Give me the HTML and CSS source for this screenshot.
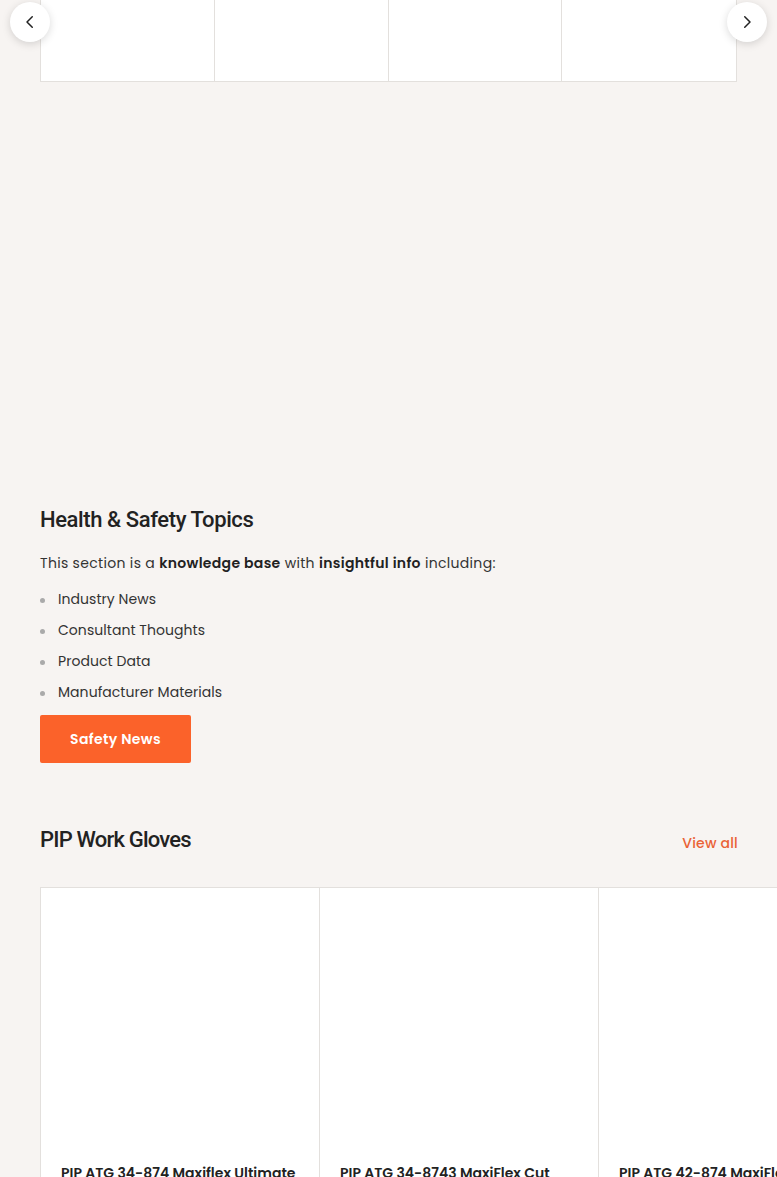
FILE: index.html
```html
<!DOCTYPE html>
<html>
<head>
    <meta charset="utf-8">
    <link rel="stylesheet" href="styles.css">
</head>
<body>
    <div class="carousel">
        <button class="nav-btn nav-prev" title="Previous">
            <svg viewBox="0 0 24 24" width="18" height="18"><path d="M15 5 L8 12 L15 19" fill="none" stroke="#222" stroke-width="2" stroke-linecap="round" stroke-linejoin="round"/></svg>
        </button>
        <div class="carousel-track">
            <div class="carousel-cell"></div>
            <div class="carousel-cell"></div>
            <div class="carousel-cell"></div>
            <div class="carousel-cell"></div>
        </div>
        <button class="nav-btn nav-next" title="Next">
            <svg viewBox="0 0 24 24" width="18" height="18"><path d="M9 5 L16 12 L9 19" fill="none" stroke="#222" stroke-width="2" stroke-linecap="round" stroke-linejoin="round"/></svg>
        </button>
    </div>

    <div class="topics">
        <h2 class="section-title">Health &amp; Safety Topics</h2>
        <p class="intro">This section is a <strong>knowledge base</strong> with <strong>insightful info</strong> including:</p>
        <ul class="topic-list">
            <li>Industry News</li>
            <li>Consultant Thoughts</li>
            <li>Product Data</li>
            <li>Manufacturer Materials</li>
        </ul>
        <a class="btn-orange" href="#">Safety News</a>
    </div>

    <div class="collection">
        <div class="collection-header">
            <h2 class="section-title">PIP Work Gloves</h2>
            <a class="view-all" href="#">View all</a>
        </div>
        <div class="product-row">
            <div class="product-card">
                <div class="product-image"></div>
                <div class="product-title">PIP ATG 34-874 Maxiflex Ultimate</div>
            </div>
            <div class="product-card">
                <div class="product-image"></div>
                <div class="product-title">PIP ATG 34-8743 MaxiFlex Cut</div>
            </div>
            <div class="product-card">
                <div class="product-image"></div>
                <div class="product-title">PIP ATG 42-874 MaxiFlex Ultimate</div>
            </div>
        </div>
    </div>
</body>
</html>
```

FILE: styles.css
```css
body {
    margin: 0;
    background: #f7f4f2;
    font-family: 'Poppins', 'Open Sans', sans-serif;
    color: #222;
    overflow: hidden;
}

/* carousel at top (cut off) */
.carousel {
    position: relative;
    padding: 0 40px;
}

.carousel-track {
    display: grid;
    grid-template-columns: repeat(4, 1fr);
    height: 82px;
    background: white;
    border: 1px solid #e3e0dd;
    border-top: none;
    box-sizing: border-box;
}

.carousel-cell {
    border-right: 1px solid #e3e0dd;
}

.carousel-cell:last-child {
    border-right: none;
}

.nav-btn {
    position: absolute;
    top: 2px;
    width: 40px;
    height: 40px;
    border-radius: 50%;
    border: none;
    background: white;
    box-shadow: 0 2px 8px rgba(0, 0, 0, 0.15);
    display: flex;
    align-items: center;
    justify-content: center;
    padding: 0;
}

.nav-prev {
    left: 10px;
}

.nav-next {
    right: 10px;
}

/* topics */
.topics {
    padding: 0 40px;
    margin-top: 423px;
}

.section-title {
    font-family: 'Roboto', sans-serif;
    font-size: 22px;
    font-weight: 500;
    letter-spacing: -0.4px;
    color: #222;
    margin: 0;
    line-height: 30px;
}

.collection .section-title {
    letter-spacing: -0.8px;
}

.intro {
    font-size: 14px;
    letter-spacing: 0.32px;
    margin: 16px 0 9px;
    line-height: 24px;
    color: #333;
}

.intro strong {
    font-weight: 600;
    color: #222;
}

.topic-list {
    list-style: none;
    margin: 0;
    padding: 0;
}

.topic-list li {
    font-size: 14px;
    letter-spacing: 0.05px;
    line-height: 31px;
    color: #333;
    padding-left: 18px;
    position: relative;
}

.topic-list li::before {
    content: "";
    position: absolute;
    left: 0;
    top: 14px;
    width: 5px;
    height: 5px;
    border-radius: 50%;
    background: #aaa;
}

.btn-orange {
    display: inline-block;
    margin-top: 7px;
    background: #fb622a;
    color: white;
    font-size: 14px;
    font-weight: 600;
    letter-spacing: 0.35px;
    text-decoration: none;
    padding: 0 30px;
    line-height: 48px;
    border-radius: 2px;
}

/* collection */
.collection {
    margin-top: 62px;
    padding-left: 40px;
}

.collection-header {
    display: flex;
    justify-content: space-between;
    align-items: center;
    padding-right: 39px;
}

.view-all {
    color: #ea6236;
    font-size: 14px;
    font-weight: 500;
    letter-spacing: 0.2px;
    text-decoration: none;
    margin-top: 7px;
}

.product-row {
    display: flex;
    margin-top: 32px;
}

.product-card {
    flex: 0 0 279px;
    background: white;
    border: 1px solid #e3e0dd;
    border-right: none;
    box-sizing: border-box;
    padding: 0 20px;
    height: 400px;
}

.product-image {
    height: 275px;
}

.product-title {
    font-size: 14px;
    font-weight: 600;
    color: #222;
    line-height: 20px;
    white-space: nowrap;
}
```
